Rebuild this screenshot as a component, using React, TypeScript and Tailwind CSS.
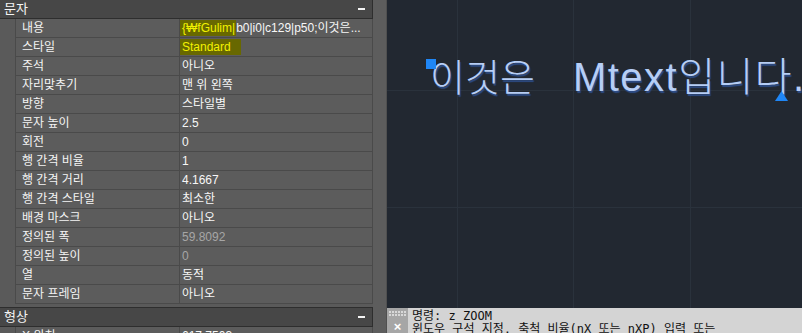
import React from 'react';

type Row = { label: string; value: React.ReactNode; dim?: boolean };

const rows: Row[] = [
  {
    label: '내용',
    value: (
      <>
        <span className="bg-[#686800] text-[#f2f200] -ml-[8px] pl-[8px] pr-[1px] py-[1px]">{'{₩fGulim|'}</span>
        b0|i0|c129|p50;이것은...
      </>
    ),
  },
  {
    label: '스타일',
    value: <span className="bg-[#686800] text-[#f2f200] -ml-[8px] pl-[8px] pr-[10px] py-[1px]">Standard</span>,
  },
  { label: '주석', value: '아니오' },
  { label: '자리맞추기', value: '맨 위 왼쪽' },
  { label: '방향', value: '스타일별' },
  { label: '문자 높이', value: '2.5' },
  { label: '회전', value: '0' },
  { label: '행 간격 비율', value: '1' },
  { label: '행 간격 거리', value: '4.1667' },
  { label: '행 간격 스타일', value: '최소한' },
  { label: '배경 마스크', value: '아니오' },
  { label: '정의된 폭', value: '59.8092', dim: true },
  { label: '정의된 높이', value: '0', dim: true },
  { label: '열', value: '동적' },
  { label: '문자 프레임', value: '아니오' },
];

const PropRow = ({ row }: { row: Row }) => (
  <div className="flex h-[19px] shrink-0">
    <div className="w-[15px] shrink-0" />
    <div className="w-[165px] shrink-0 border-l border-b border-r border-[#4a4a4a] bg-[#5c5c5c] pl-[6px] leading-[18px] text-[#f4f4f4] whitespace-nowrap">
      {row.label}
    </div>
    <div
      className={
        'flex-1 border-b border-r border-[#4a4a4a] bg-[#5c5c5c] pl-[2px] leading-[18px] whitespace-nowrap overflow-hidden ' +
        (row.dim ? 'text-[#a6a6a6]' : 'text-[#f7f7f7]')
      }
    >
      {row.value}
    </div>
  </div>
);

const SectionHeader = ({ title }: { title: string }) => (
  <div className="flex items-center justify-between h-[20px] shrink-0 bg-[#474747] border-y border-r border-[#2e2e2e] pl-[4px] pr-[7px] text-[13px] text-[#f4f4f4]">
    <span>{title}</span>
    <span className="w-[7px] h-[2px] bg-[#f4f4f4]" />
  </div>
);

export default function App() {
  return (
    <div
      className="w-[802px] h-[333px] overflow-hidden flex bg-[#5a5a5a] text-[12px]"
      style={{ fontFamily: '"Liberation Sans", "Noto Sans CJK KR", sans-serif' }}
    >
      {/* properties palette */}
      <div className="w-[387px] shrink-0 flex">
        <div className="w-[373px] shrink-0 flex flex-col">
          <div className="flex items-center justify-between h-[19px] shrink-0 bg-[#474747] border-b border-r border-[#2e2e2e] pl-[4px] pr-[7px] text-[13px] text-[#f4f4f4]">
            <span>문자</span>
            <span className="w-[7px] h-[2px] bg-[#f4f4f4]" />
          </div>
          {rows.map((r) => (
            <PropRow key={r.label} row={r} />
          ))}
          <div className="h-[3px] shrink-0" />
          <SectionHeader title="형상" />
          <PropRow row={{ label: 'X 위치', value: '617.7503' }} />
        </div>
        <div className="flex-1 bg-[#5d5d5d] border-r border-[#505050]" />
      </div>

      {/* drawing area */}
      <div className="flex-1 flex flex-col bg-[#222831]">
        <div className="flex-1 relative overflow-hidden">
          <div className="absolute top-0 bottom-0 left-[70px] w-px bg-[#2a323c]" />
          <div className="absolute top-0 bottom-0 left-[186px] w-px bg-[#2a323c]" />
          <div className="absolute top-0 bottom-0 left-[303px] w-px bg-[#2a323c]" />
          <div className="absolute left-0 right-0 top-[90px] h-px bg-[#2a323c]" />
          <div className="absolute left-0 right-0 top-[207px] h-px bg-[#2a323c]" />

          <div
            className="absolute left-[43px] top-[52px] whitespace-nowrap text-[38px] font-light leading-[50px] text-[#b6cef6]"
            style={{ textShadow: '1px 2px 1px #2d4c86' }}
          >
            이것은<span className="ml-[38px] text-[40px] tracking-[1.5px]">Mtext입니다.</span>
          </div>
          <div className="absolute left-[39px] top-[59px] w-[10px] h-[10px] bg-[#1f86f5]" />
          <svg className="absolute left-[388px] top-[91px]" width="13" height="10" viewBox="0 0 13 10">
            <polygon points="6.5,0 13,10 0,10" fill="#1f86f5" />
          </svg>
        </div>

        <div className="h-[25px] shrink-0 flex bg-[#d4d4d4]">
          <div className="w-[21px] shrink-0 bg-[#a6a6a6] flex flex-col items-center pt-[3px]">
            <svg width="18" height="5" viewBox="0 0 18 5">
              {[0, 3, 6, 9, 12, 15].map((x) => (
                <React.Fragment key={x}>
                  <rect x={x} y="0" width="2" height="2" fill="#d8d8d8" />
                  <rect x={x} y="3" width="2" height="2" fill="#d8d8d8" />
                </React.Fragment>
              ))}
            </svg>
            <span className="text-white font-bold text-[13px] leading-[13px] mt-[4px]">×</span>
          </div>
          <div
            className="pl-[4px] pt-[2px] text-[12px] leading-[13px] text-[#111] whitespace-nowrap overflow-hidden"
            style={{ fontFamily: '"DejaVu Sans Mono", "Noto Sans CJK KR", monospace' }}
          >
            <div>명령: z ZOOM</div>
            <div>윈도우 구석 지정, 축척 비율(nX 또는 nXP) 입력 또는</div>
          </div>
        </div>
      </div>
    </div>
  );
}
